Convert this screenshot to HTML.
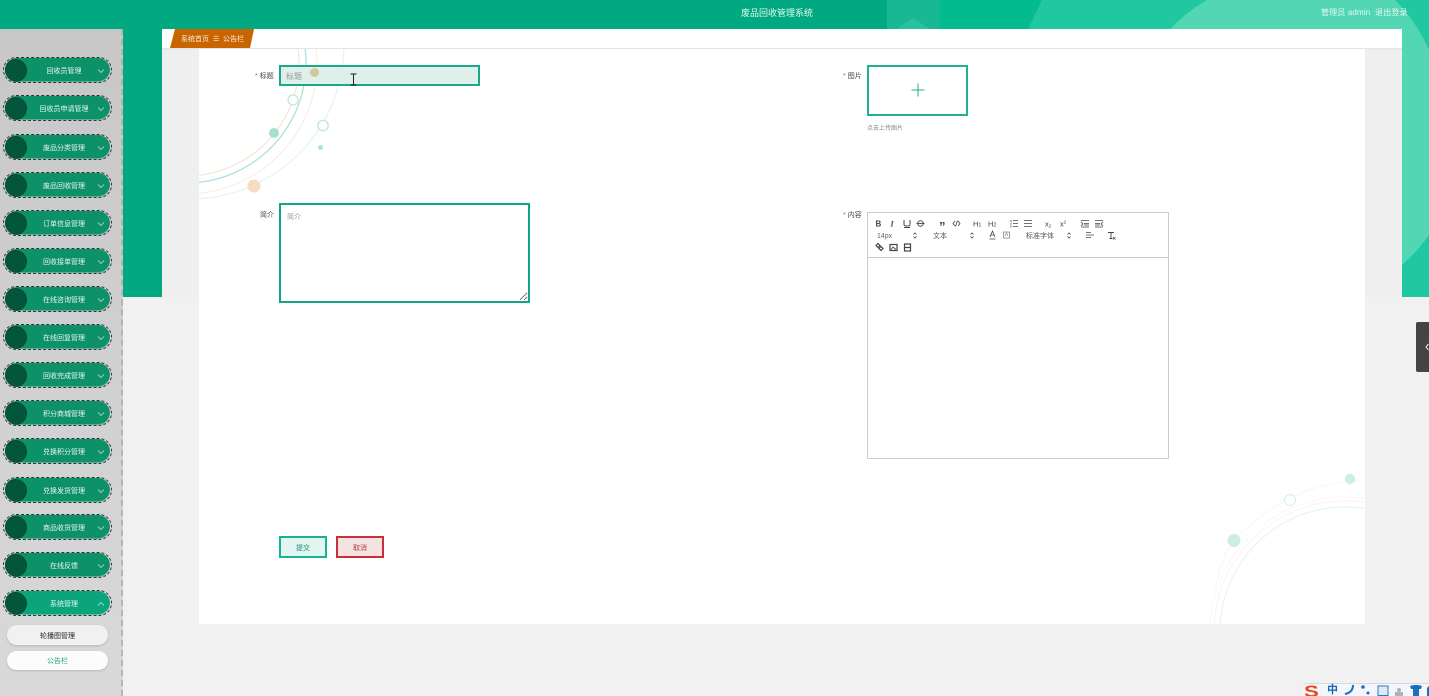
<!DOCTYPE html>
<html lang="zh-CN">
<head>
<meta charset="utf-8">
<title>废品回收管理系统</title>
<style>
html,body{margin:0;padding:0;width:1429px;height:696px;overflow:hidden;background:#f1f1f1}
body{font-family:"Liberation Sans","Noto Sans CJK SC",sans-serif;position:relative}
#page{position:absolute;left:0;top:0;width:1429px;height:696px;overflow:hidden;filter:blur(.35px)}
.a{position:absolute;white-space:nowrap}
svg.bg{position:absolute;left:0;top:0}
#side{position:absolute;left:-1px;top:29px;width:122px;height:667px;background:linear-gradient(180deg,#c7c7c7,#d9d9d9);border-right:2px dashed #b4b4b4;overflow:hidden}
.m{position:absolute;left:4px;width:107px;height:24px;border:1px dashed #333;border-radius:13px}
.p{position:absolute;left:1px;top:0;width:105px;height:24px;border-radius:12px;background:#0c9169;box-shadow:inset 0 -1px 0 rgba(255,255,255,.3);color:#e8f5f0;font-size:7px;line-height:27px;text-align:center;text-indent:13px;overflow:hidden}
.p.on{background:#0ba57d}
.c{position:absolute;left:0;top:1.500px;width:21px;height:21px;border-radius:50%;background:#04563a;box-shadow:0 0 0 1px #064a33}
.v{position:absolute;left:92px;top:10px}
.s{position:absolute;left:8px;width:101px;border-radius:10px;text-align:center;font-size:7px;box-shadow:0 1px 2px rgba(0,0,0,.15)}
.l{font-size:7px;color:#444;line-height:10px}
.l i{font-style:normal;color:#d9534f;margin-right:2px}
input,textarea{position:absolute;box-sizing:border-box;margin:0;outline:none;font-family:"Liberation Sans","Noto Sans CJK SC",sans-serif;border-radius:0}
input::placeholder,textarea::placeholder{color:#999;opacity:1}
.b{position:absolute;box-sizing:border-box;width:48px;height:22px;font-size:7px;line-height:21px;text-align:center;border:2px solid}
</style>
</head>
<body>
<div id="page">
<svg class="bg" width="1429" height="696" viewBox="0 0 1429 696">
  <defs>
    <clipPath id="top"><path d="M122 0H1429V297H1402V29H162V297H122V29H0V0Z"/></clipPath>
  </defs>
  <rect width="1429" height="696" fill="#f1f1f1"/>
  <g clip-path="url(#top)">
    <rect x="0" y="0" width="1429" height="297" fill="#02bb8f"/>
    <rect x="0" y="0" width="887" height="297" fill="#00a97f"/>
    <rect x="887" y="0" width="53" height="29" fill="#17b893"/>
    <path d="M897 29L913 18 930 29Z" fill="#2bc19e"/>
    <path d="M1042 0H1429V297H1402V29H1028Z" fill="#1fc8a0"/>
    <path d="M1207 0H1395A165 165 0 0 1 1429 50V235A165 165 0 0 1 1402 265V29H1170A170 170 0 0 1 1207 0Z" fill="#52d6b4"/>
  </g>
  <rect x="0" y="0" width="122" height="29" fill="#00a97f"/>
  <rect x="162" y="29" width="1240" height="20" fill="#fff"/>
  <rect x="162" y="48" width="1240" height="1.5" fill="#e4e4e4"/>
  <rect x="162" y="49.5" width="37" height="247.5" fill="#efefef"/>
  <rect x="1365" y="49.5" width="37" height="247.5" fill="#efefef"/>
  <rect x="199" y="49" width="1166" height="575" fill="#fff"/>
  <g fill="none">
    <path d="M199 182.300A120 120 0 0 0 305.200 49" stroke="#a9dfd2" stroke-width="1.200"/>
    <path d="M199 175.250A113 113 0 0 0 298.100 49" stroke="#f6e0c9" stroke-width="1"/>
    <path d="M199 193.350A131 131 0 0 0 316.250 49" stroke="#f8ebdd" stroke-width="1"/>
    <path d="M199 198.700A154 154 0 0 0 343.900 49" stroke="#dff2ec" stroke-width="1"/>
    <circle cx="254" cy="186" r="6.500" fill="#f5dcc5"/>
    <circle cx="274" cy="133" r="5" fill="#a4e0d0"/>
    <circle cx="293" cy="100" r="5" fill="#fff" stroke="#bfe8dc" stroke-width="1.200"/>
    <circle cx="323" cy="125.500" r="5.200" fill="#fff" stroke="#b5e5d8" stroke-width="1.200"/>
    <circle cx="320.500" cy="147.500" r="2.500" fill="#aee2d4"/>
    <path d="M1220.300 624A125 125 0 0 1 1365 508.600" stroke="#e0f4ef" stroke-width="1"/>
    <path d="M1214.200 624A131 131 0 0 1 1365 502.500" stroke="#fdf4ea" stroke-width="1"/>
    <path d="M1210.200 624A135 135 0 0 1 1365 498.500" stroke="#fdf7f0" stroke-width="1"/>
    <path d="M1365 480Q1290 482 1234 540Q1222 555 1215 590" stroke="#f1faf7" stroke-width="1"/>
    <circle cx="1350" cy="479" r="5.200" fill="#cdeee4"/>
    <circle cx="1290" cy="500" r="5.500" fill="#fff" stroke="#d8f2ea" stroke-width="1.200"/>
    <circle cx="1234" cy="540.500" r="6.500" fill="#cdeee4"/>
  </g>
  <path d="M175 29H254L250 48H170Z" fill="#c86500"/>
</svg>

<div class="a" style="left:741px;top:7px;font-size:9px;line-height:12px;color:#e6f7f2">废品回收管理系统</div>
<div class="a" style="left:1321px;top:7px;font-size:8px;line-height:11px;color:#e6f7f2;letter-spacing:.15px">管理员 admin &nbsp;退出登录</div>

<div class="a" style="left:181px;top:35px;font-size:7px;line-height:10px;color:#fbeedd">系统首页</div>
<div class="a" style="left:213px;top:35px;font-size:7px;line-height:10px;color:#fbeedd">☰</div>
<div class="a" style="left:223px;top:35px;font-size:7px;line-height:10px;color:#fbeedd">公告栏</div>

<div id="side">
  <div class="m" style="top:28px"><div class="p"><span class="c"></span>回收员管理<svg class="v" width="8" height="6" viewBox="0 0 8 6"><path d="M1 1.500L4 4.500 7 1.500" fill="none" stroke="#cfe9df" stroke-width=".7"/></svg></div></div>
  <div class="m" style="top:66px"><div class="p"><span class="c"></span>回收员申请管理<svg class="v" width="8" height="6" viewBox="0 0 8 6"><path d="M1 1.500L4 4.500 7 1.500" fill="none" stroke="#cfe9df" stroke-width=".7"/></svg></div></div>
  <div class="m" style="top:105px"><div class="p"><span class="c"></span>废品分类管理<svg class="v" width="8" height="6" viewBox="0 0 8 6"><path d="M1 1.500L4 4.500 7 1.500" fill="none" stroke="#cfe9df" stroke-width=".7"/></svg></div></div>
  <div class="m" style="top:143px"><div class="p"><span class="c"></span>废品回收管理<svg class="v" width="8" height="6" viewBox="0 0 8 6"><path d="M1 1.500L4 4.500 7 1.500" fill="none" stroke="#cfe9df" stroke-width=".7"/></svg></div></div>
  <div class="m" style="top:181px"><div class="p"><span class="c"></span>订单信息管理<svg class="v" width="8" height="6" viewBox="0 0 8 6"><path d="M1 1.500L4 4.500 7 1.500" fill="none" stroke="#cfe9df" stroke-width=".7"/></svg></div></div>
  <div class="m" style="top:219px"><div class="p"><span class="c"></span>回收接单管理<svg class="v" width="8" height="6" viewBox="0 0 8 6"><path d="M1 1.500L4 4.500 7 1.500" fill="none" stroke="#cfe9df" stroke-width=".7"/></svg></div></div>
  <div class="m" style="top:257px"><div class="p"><span class="c"></span>在线咨询管理<svg class="v" width="8" height="6" viewBox="0 0 8 6"><path d="M1 1.500L4 4.500 7 1.500" fill="none" stroke="#cfe9df" stroke-width=".7"/></svg></div></div>
  <div class="m" style="top:295px"><div class="p"><span class="c"></span>在线回复管理<svg class="v" width="8" height="6" viewBox="0 0 8 6"><path d="M1 1.500L4 4.500 7 1.500" fill="none" stroke="#cfe9df" stroke-width=".7"/></svg></div></div>
  <div class="m" style="top:333px"><div class="p"><span class="c"></span>回收完成管理<svg class="v" width="8" height="6" viewBox="0 0 8 6"><path d="M1 1.500L4 4.500 7 1.500" fill="none" stroke="#cfe9df" stroke-width=".7"/></svg></div></div>
  <div class="m" style="top:371px"><div class="p"><span class="c"></span>积分商城管理<svg class="v" width="8" height="6" viewBox="0 0 8 6"><path d="M1 1.500L4 4.500 7 1.500" fill="none" stroke="#cfe9df" stroke-width=".7"/></svg></div></div>
  <div class="m" style="top:409px"><div class="p"><span class="c"></span>兑换积分管理<svg class="v" width="8" height="6" viewBox="0 0 8 6"><path d="M1 1.500L4 4.500 7 1.500" fill="none" stroke="#cfe9df" stroke-width=".7"/></svg></div></div>
  <div class="m" style="top:448px"><div class="p"><span class="c"></span>兑换发货管理<svg class="v" width="8" height="6" viewBox="0 0 8 6"><path d="M1 1.500L4 4.500 7 1.500" fill="none" stroke="#cfe9df" stroke-width=".7"/></svg></div></div>
  <div class="m" style="top:485px"><div class="p"><span class="c"></span>商品收货管理<svg class="v" width="8" height="6" viewBox="0 0 8 6"><path d="M1 1.500L4 4.500 7 1.500" fill="none" stroke="#cfe9df" stroke-width=".7"/></svg></div></div>
  <div class="m" style="top:523px"><div class="p"><span class="c"></span>在线反馈<svg class="v" width="8" height="6" viewBox="0 0 8 6"><path d="M1 1.500L4 4.500 7 1.500" fill="none" stroke="#cfe9df" stroke-width=".7"/></svg></div></div>
  <div class="m" style="top:561px"><div class="p on"><span class="c"></span>系统管理<svg class="v" width="8" height="6" viewBox="0 0 8 6"><path d="M1 4.500L4 1.500 7 4.500" fill="none" stroke="#d8f0e8" stroke-width=".7"/></svg></div></div>
  <div class="s" style="top:596px;height:20px;line-height:23px;background:#f1f1f1;color:#222">轮播图管理</div>
  <div class="s" style="top:622px;height:19px;line-height:22px;background:#fcfcfc;color:#23a584">公告栏</div>
</div>

<div class="a l" style="left:255px;top:72px"><i>*</i>标题</div>
<input type="text" placeholder="标题" style="left:279px;top:65px;width:201px;height:21px;border:2px solid #17a98a;background:#dff0ea;font-size:8px;padding:2px 5px 0;color:#999">
<div class="a" style="left:309.500px;top:67.500px;width:9px;height:9px;border-radius:50%;background:#d3c79c"></div>
<svg class="a" style="left:349px;top:73px" width="9" height="13" viewBox="0 0 9 13"><path d="M1.500 1H7.500M4.500 1V12M1.500 12H7.500" fill="none" stroke="#222" stroke-width="1"/></svg>

<div class="a l" style="left:843px;top:72px"><i>*</i>图片</div>
<div class="a" style="left:867px;top:65px;width:101px;height:51px;box-sizing:border-box;border:2px solid #1eb08f;background:#fff"></div>
<svg class="a" style="left:911px;top:83px" width="14" height="14" viewBox="0 0 14 14"><path d="M7 0.500V13.500M0.500 7H13.500" stroke="#25ac8e" stroke-width="1"/></svg>
<div class="a" style="left:867px;top:125px;font-size:6px;line-height:9px;color:#888">点击上传图片</div>

<div class="a l" style="left:260px;top:211px">简介</div>
<textarea placeholder="简介" style="left:279px;top:203px;width:251px;height:100px;border:2px solid #12a585;background:#fff;font-size:7px;padding:7px 6px;color:#999"></textarea>

<div class="a l" style="left:843px;top:211px"><i>*</i>内容</div>
<div class="a" style="left:867px;top:212px;width:302px;height:247px;box-sizing:border-box;border:1px solid #ccc;background:#fff"></div>
<div class="a" style="left:868px;top:257px;width:300px;height:1px;background:#ccc"></div>

<svg class="a" style="left:867px;top:212px" width="302" height="46" viewBox="867 212 302 46" fill="none" stroke="#444" stroke-width="1">
  <text x="875.500" y="226.500" font-size="8" font-weight="700" fill="#444" stroke="none" font-family="Liberation Sans">B</text>
  <text x="890.500" y="226.500" font-size="8" font-style="italic" font-family="Liberation Serif" font-weight="700" fill="#444" stroke="none">I</text>
  <path d="M904 220V224.500Q904 226 907 226T910 224.500V220M904 227.500H910"/>
  <circle cx="920.500" cy="223.500" r="2.800" stroke-width=".9"/><path d="M916.500 223.500H924.500" stroke-width=".9"/>
  <text x="939" y="231" font-size="13" font-weight="700" fill="#444" stroke="none" font-family="Liberation Sans">”</text>
  <path d="M955 221L953 223.500 955 226M958 221L960 223.500 958 226M957.500 220.500L955.500 226.500" stroke-width=".8"/>
  <text x="973" y="226.500" font-size="7.500" fill="#444" stroke="none" font-family="Liberation Sans">H<tspan font-size="5.500">1</tspan></text>
  <text x="988" y="226.500" font-size="7.500" fill="#444" stroke="none" font-family="Liberation Sans">H<tspan font-size="5.500">2</tspan></text>
  <path d="M1013 220.500H1018M1013 223.500H1018M1013 226.500H1018M1011 220V222M1011 223V224.500M1011 225.500V227.500" stroke-width=".8"/>
  <path d="M1024 220.500H1032M1024 223.500H1032M1024 226.500H1032" stroke-width=".8"/>
  <text x="1045" y="226.500" font-size="7.500" fill="#444" stroke="none" font-family="Liberation Sans">x<tspan font-size="4.500" dy="1">2</tspan></text>
  <text x="1060" y="226.500" font-size="7.500" fill="#444" stroke="none" font-family="Liberation Sans">x<tspan font-size="4.500" dy="-3">2</tspan></text>
  <path d="M1081 220.500H1089M1084 223.500H1089M1084 225H1089M1081 227H1089M1081 222L1083 224 1081 226" stroke-width=".8"/>
  <path d="M1095 220.500H1103M1095 223.500H1100M1095 225H1100M1095 227H1103M1103 222L1101 224 1103 226" stroke-width=".8"/>
  <text x="877" y="238" font-size="7" fill="#666" stroke="none" font-family="Liberation Sans">14px</text>
  <path d="M913.500 234.500L915 233 916.500 234.500M913.500 236.500L915 238 916.500 236.500" stroke-width=".8"/>
  <text x="933" y="238" font-size="7" fill="#555" stroke="none" font-family="Liberation Sans, Noto Sans CJK SC">文本</text>
  <path d="M970.500 234.500L972 233 973.500 234.500M970.500 236.500L972 238 973.500 236.500" stroke-width=".8"/>
  <path d="M990 237L992.500 231 995 237M991 235H994M989.500 239H995.500" stroke-width=".8"/>
  <rect x="1003.500" y="232" width="6" height="6" stroke-width=".7" stroke="#777"/><path d="M1005 236L1006.500 233 1008 236" stroke-width=".6" stroke="#777"/>
  <text x="1026" y="238" font-size="7" fill="#555" stroke="none" font-family="Liberation Sans, Noto Sans CJK SC">标准字体</text>
  <path d="M1067.500 234.500L1069 233 1070.500 234.500M1067.500 236.500L1069 238 1070.500 236.500" stroke-width=".8"/>
  <path d="M1086 232.500H1091M1086 235H1094M1086 237.500H1091" stroke-width=".8"/>
  <path d="M1108 232.500H1114M1111 232.500V238.500M1109.500 238.500H1112.500" stroke-width=".9"/><path d="M1113 237L1115.500 239.500M1115.500 237L1113 239.500" stroke-width=".7"/>
  <path d="M876 245.500L878 243.500 880 245.500 878 247.500ZM879 248.500L881 246.500 883 248.500 881 250.500Z" stroke-width="1.200"/>
  <rect x="890" y="244.500" width="7" height="6" stroke-width="1.200"/><path d="M891 249.500L893 247 896 249.500" stroke-width=".9"/>
  <rect x="904.500" y="244" width="6" height="7" stroke-width="1.200"/><path d="M904.500 247.500H910.500" stroke-width="1.200"/>
</svg>

<div class="b" style="left:279px;top:536px;border-color:#18b394;background:#e3f5f0;color:#17907a">提交</div>
<div class="b" style="left:336px;top:536px;border-color:#cc2f3c;background:#f5e3e3;color:#b23a3f">取消</div>

<div class="a" style="left:1416px;top:322px;width:13px;height:50px;background:#444;border-radius:2px 0 0 2px"></div>
<svg class="a" style="left:1424px;top:342px" width="5" height="10" viewBox="0 0 5 10"><path d="M4.500 2L2 5 4.500 8" fill="none" stroke="#eee" stroke-width="1"/></svg>

<div class="a" style="left:1303px;top:683px;width:126px;height:13px;background:#f4f6f9;border-top:1px solid #d3dbe6;box-sizing:border-box;border-radius:4px 0 0 0"></div>
<div class="a" style="left:1303px;top:683px;width:20px;height:13px;overflow:hidden"><div style="position:absolute;left:1px;top:1px;height:12px;font-size:17px;line-height:16px;font-weight:700;color:#e8481c;transform:scaleX(1.300);transform-origin:left center">S</div></div>
<div class="a" style="left:1327px;top:684px;height:12px;font-size:11px;line-height:12px;font-weight:700;color:#1566b3">中</div>
<svg class="a" style="left:1343px;top:684px" width="86" height="12" viewBox="0 0 86 12">
  <path d="M10 1C10 6 7 9 2 10" fill="none" stroke="#1b6fc2" stroke-width="2"/>
  <circle cx="20" cy="3" r="1.800" fill="#1b6fc2"/><circle cx="25" cy="9" r="1.500" fill="#1b6fc2"/>
  <rect x="35" y="2" width="10" height="9.500" fill="#dfeaf7" stroke="#2f78bf"/>
  <circle cx="56" cy="6" r="2" fill="#a9b3bf"/><rect x="52" y="8" width="8" height="4" fill="#a9b3bf"/>
  <path d="M67 2L71 1H75L79 2 78 5H76V12H70V5H68Z" fill="#1b6fc2"/>
  <path d="M84 4L86 2V12H84Z" fill="#1b6fc2"/>
</svg>
</div>
</body>
</html>
